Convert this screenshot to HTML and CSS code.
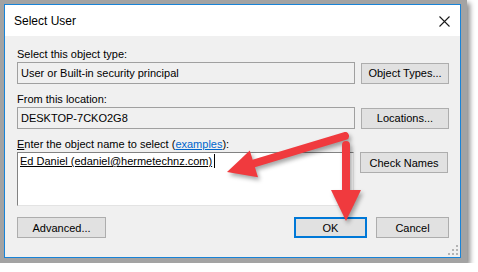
FILE: index.html
```html
<!DOCTYPE html>
<html lang="en">
<head>
    <meta charset="UTF-8">
    <title>Select User</title>
    <link rel="stylesheet" href="styles.css">
</head>
<body>
    <div class="frame">
        <div class="window">
            <div class="titlebar">
                <span class="title">Select User</span>
                <svg class="close" width="11" height="11" viewBox="0 0 11 11">
                    <path d="M0.5 0.5 L10.5 10.5 M10.5 0.5 L0.5 10.5" stroke="#1a1a1a" stroke-width="1.1" fill="none"/>
                </svg>
            </div>
            <div class="content">
                <div class="label">Select this object type:</div>
                <div class="row">
                    <div class="field">User or Built-in security principal</div>
                    <button class="btn">Object Types...</button>
                </div>

                <div class="label">From this location:</div>
                <div class="row">
                    <div class="field">DESKTOP-7CKO2G8</div>
                    <button class="btn">Locations...</button>
                </div>

                <div class="label"><u>E</u>nter the object name to select (<a href="#" class="link">examples</a>):</div>
                <div class="row row-top">
                    <div class="names"><span class="resolved">Ed Daniel (edaniel@hermetechnz.com)</span><span class="caret"></span></div>
                    <button class="btn">Check Names</button>
                </div>

                <div class="footer">
                    <button class="btn">Advanced...</button>
                    <div class="spacer"></div>
                    <button class="btn btn-ok">OK</button>
                    <button class="btn">Cancel</button>
                </div>
            </div>
            <div class="grip">
                <i style="grid-column: 3; grid-row: 1"></i>
                <i style="grid-column: 2; grid-row: 2"></i>
                <i style="grid-column: 3; grid-row: 2"></i>
                <i style="grid-column: 1; grid-row: 3"></i>
                <i style="grid-column: 2; grid-row: 3"></i>
                <i style="grid-column: 3; grid-row: 3"></i>
            </div>
        </div>
    </div>

    <!-- callout arrows drawn over the dialog -->
    <svg class="arrows" width="478" height="272" viewBox="0 0 478 272">
        <g class="arrow">
            <line x1="345" y1="136" x2="252" y2="164" stroke="#f03a3e" stroke-width="8" stroke-linecap="round"/>
            <polygon points="227,172 249.8,150.4 258,177.2" fill="#f03a3e"/>
            <line x1="346" y1="145" x2="346" y2="194" stroke="#f03a3e" stroke-width="8" stroke-linecap="round"/>
            <polygon points="331,190 361,190 346,221" fill="#f03a3e"/>
        </g>
    </svg>
</body>
</html>
```

FILE: styles.css
```css
body {
    margin: 0;
    padding: 0;
    background-color: #ffffff;
    font-family: "Liberation Sans", Arial, sans-serif;
    font-size: 11px;
    color: #000;
}

.frame {
    width: 457px;
    padding: 4px 6px 5px 4px;
    background-color: #a3a3a3;
    box-shadow: 3px 3px 5px rgba(0, 0, 0, 0.45);
}

.window {
    position: relative;
    border: 1px solid #1883d7;
    background-color: #f0f0f0;
}

.titlebar {
    height: 31px;
    background-color: #ffffff;
    display: flex;
    align-items: center;
    padding: 0 10px 0 9px;
}

.title {
    flex: 1;
    font-size: 12px;
    margin-top: 1px;
}

.close {
    margin-top: 1px;
}

.content {
    height: 221px;
    box-sizing: border-box;
    padding: 11px 11px 0 12px;
}

.label {
    line-height: 15px;
    height: 15px;
}

.row {
    display: flex;
    align-items: center;
    gap: 6px;
    margin-bottom: 8px;
}

.row-top {
    align-items: flex-start;
    margin-bottom: 11px;
}

.field {
    width: 338px;
    height: 22px;
    box-sizing: border-box;
    border: 1px solid #a0a0a0;
    padding: 0 3px;
    line-height: 20px;
    background-color: #f0f0f0;
}

.btn {
    width: 88px;
    height: 21px;
    padding: 0;
    border: 1px solid #adadad;
    background-color: #e1e1e1;
    font-family: "Liberation Sans", Arial, sans-serif;
    font-size: 11px;
    color: #000;
}

.link {
    color: #0066cc;
}

.names {
    width: 337px;
    height: 54px;
    box-sizing: border-box;
    border-top: 1px solid #828282;
    border-left: 1px solid #828282;
    border-right: 1px solid #e3e3e3;
    border-bottom: 1px solid #e3e3e3;
    background-color: #ffffff;
    padding: 1px 2px;
    line-height: 15px;
}

.resolved {
    text-decoration: underline;
}

.caret {
    display: inline-block;
    width: 1px;
    height: 14px;
    margin-left: 2px;
    vertical-align: -3px;
    background-color: #000;
}

.footer {
    display: flex;
    gap: 9px;
}

.spacer {
    flex: 1;
}

.footer .btn {
    width: 73px;
}

.footer .btn:first-child {
    width: 89px;
}

.btn-ok {
    border: 2px solid #0078d7;
}

.grip {
    position: absolute;
    right: 2px;
    bottom: 2px;
    display: grid;
    grid-template-columns: repeat(3, 2px);
    grid-template-rows: repeat(3, 2px);
    gap: 2px;
}

.grip i {
    background-color: #b4b4b4;
}

.arrows {
    position: absolute;
    top: 0;
    left: 0;
    pointer-events: none;
}

.arrow {
    filter: drop-shadow(2px 3px 2px rgba(0, 0, 0, 0.35));
}
```
